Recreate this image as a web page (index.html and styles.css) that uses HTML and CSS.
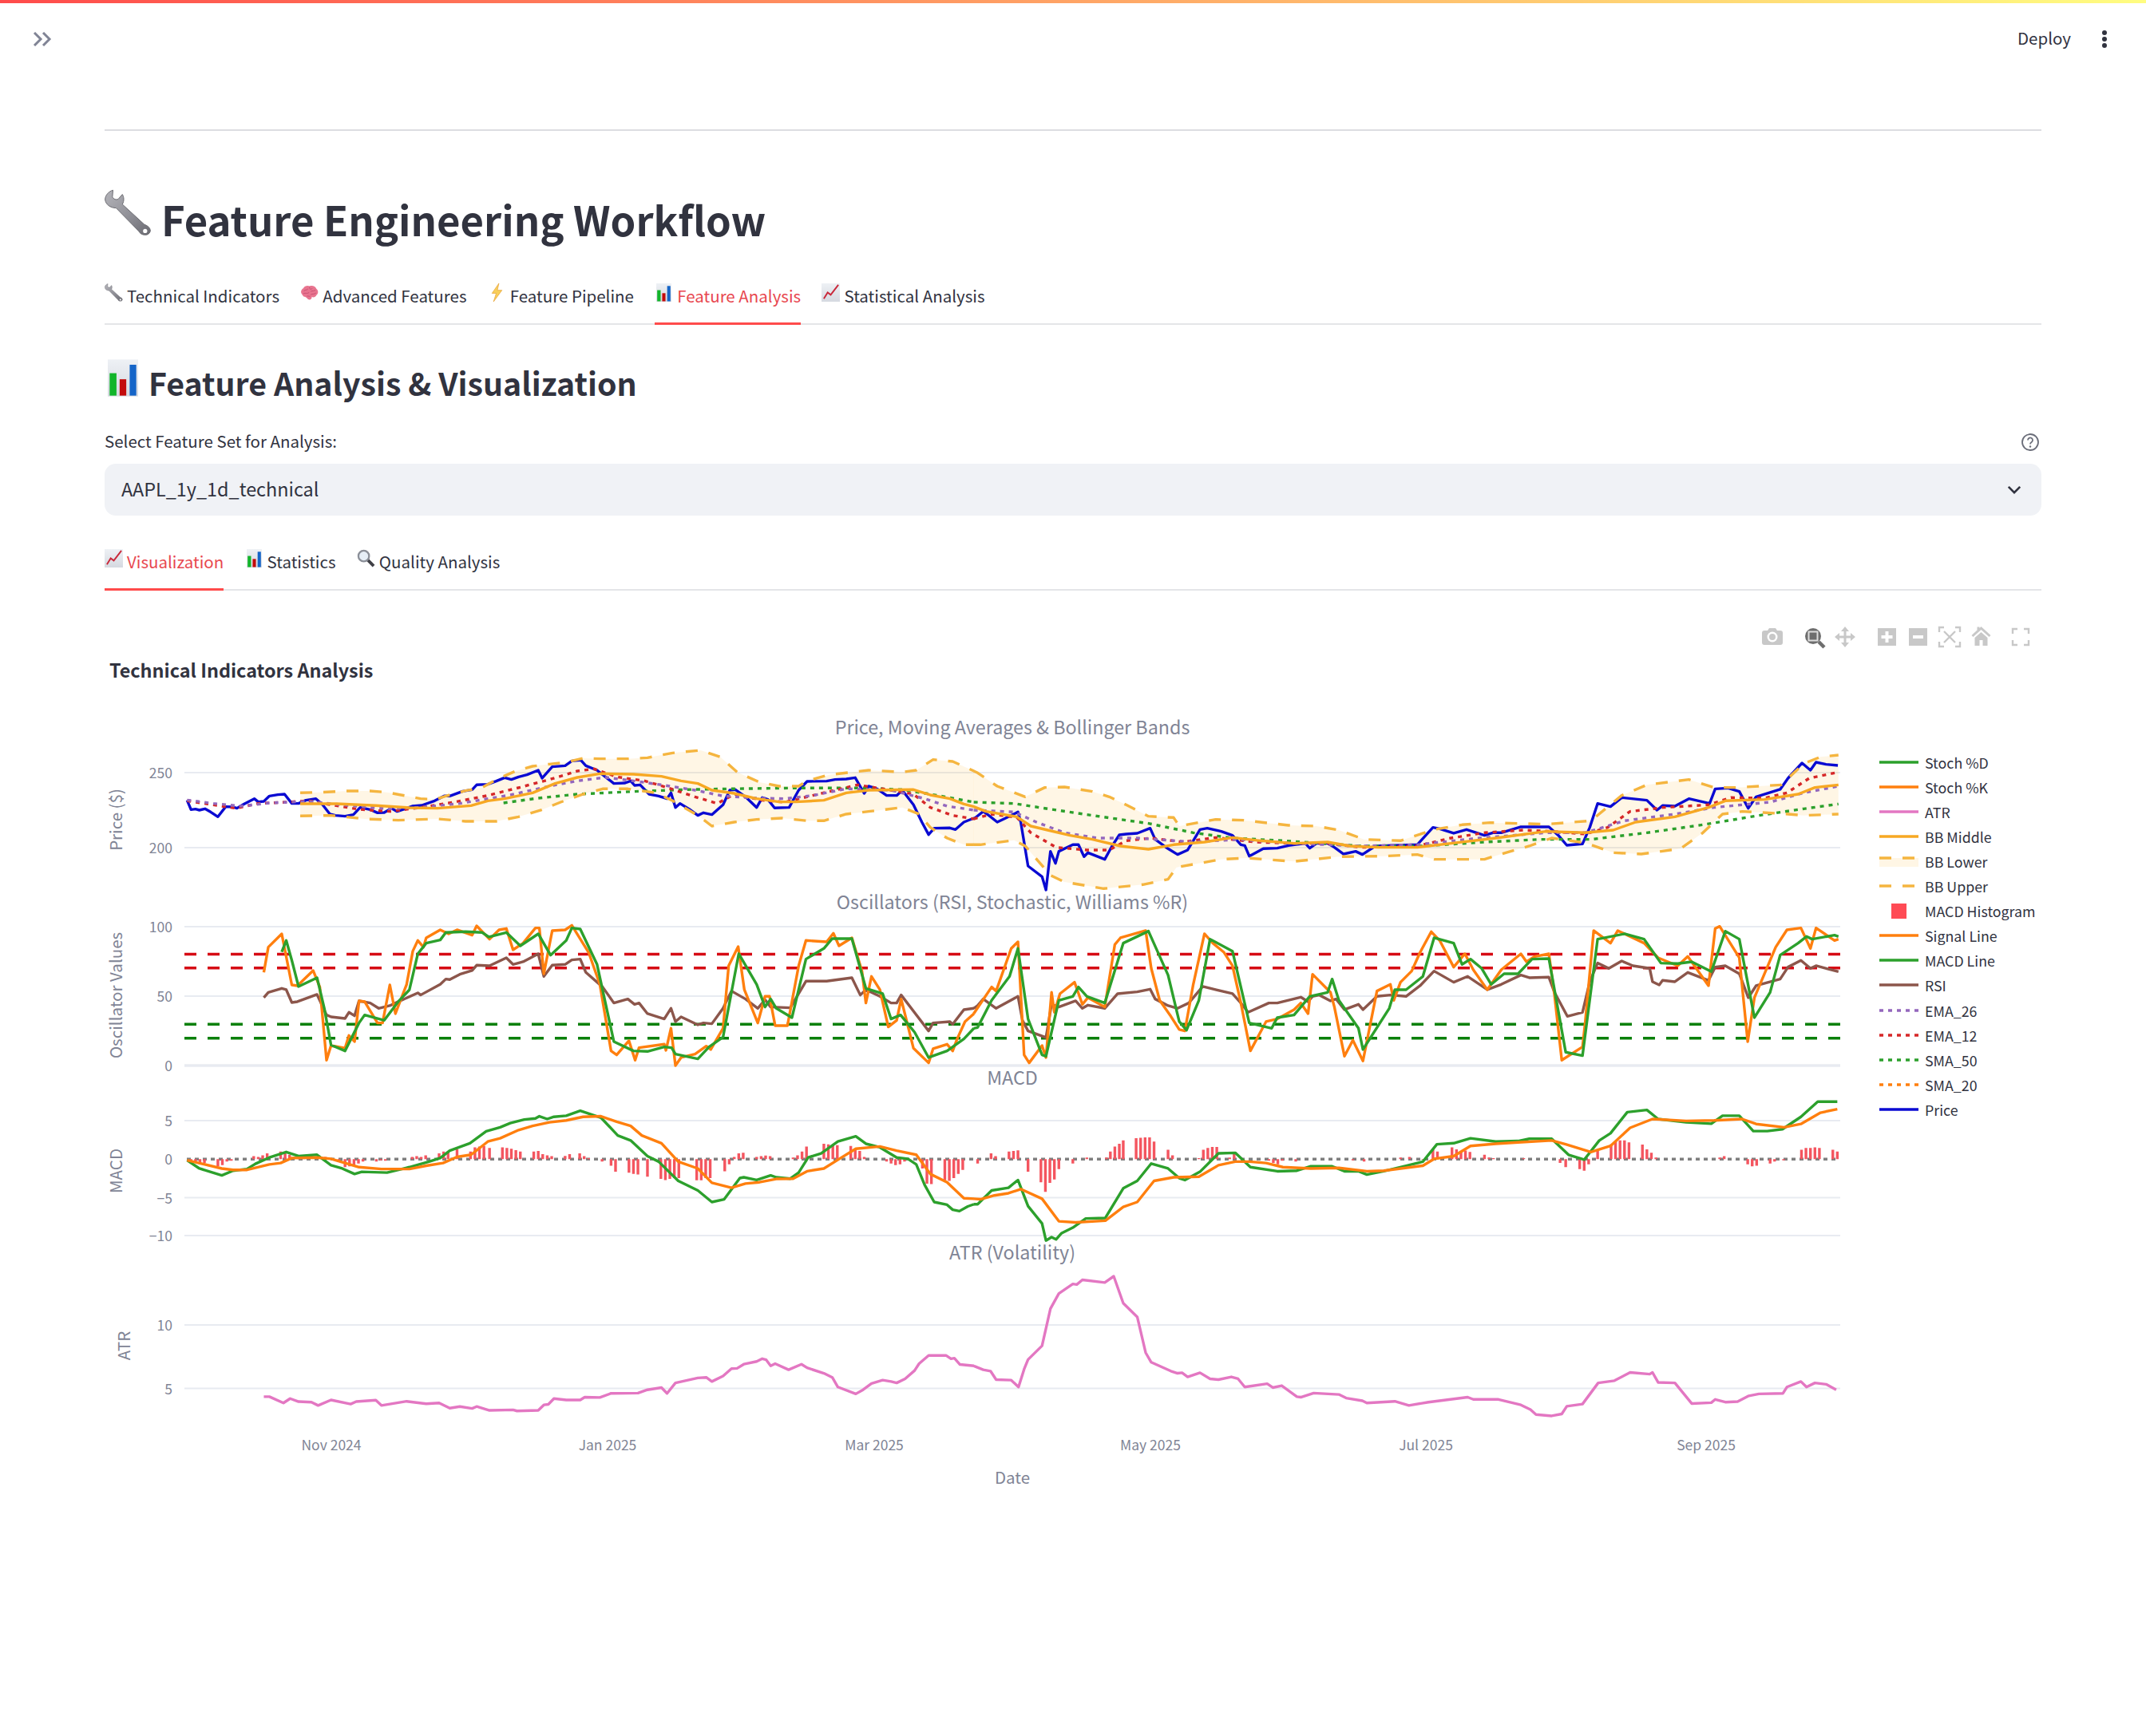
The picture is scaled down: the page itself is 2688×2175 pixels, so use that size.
FILE: index.html
```html
<!DOCTYPE html>
<html>
<head>
<title>Feature Engineering Workflow</title>
<meta charset="utf-8">
<link rel="stylesheet" href="styles.css">
</head>
<body>
<svg class="defs" width="0" height="0">
  <defs>
    <linearGradient id="steel" x1="0" y1="0" x2="1" y2="1">
      <stop offset="0" stop-color="#b4b4ba"/><stop offset=".6" stop-color="#8c8c93"/><stop offset="1" stop-color="#6a6a71"/>
    </linearGradient>
    <linearGradient id="paper" x1="0" y1="0" x2="0" y2="1">
      <stop offset="0" stop-color="#eef1f5"/><stop offset="1" stop-color="#d5d9e0"/>
    </linearGradient>
    <symbol id="e-wrench" viewBox="20 20 180 180">
      <path fill="url(#steel)" stroke="#6a6a70" stroke-width="3" d="M52 24C36 28 22 44 22 60C24 78 42 92 64 92L150 180C158 198 190 202 195 180C195 165 180 158 172 155L88 78C96 64 94 50 88 40L72 58C64 62 54 58 50 50Z"/>
      <circle cx="175" cy="180" r="8" fill="#fff"/>
    </symbol>
    <symbol id="e-brain" viewBox="0 0 70 60">
      <path fill="#e8748f" d="M8 38C0 30 3 18 12 14C16 5 28 2 36 6C46 2 58 6 62 16C70 22 70 34 62 40C58 48 50 50 44 46C46 54 38 60 30 56C26 50 20 46 16 46C12 44 10 42 8 38Z"/>
      <path fill="none" stroke="#c24a6c" stroke-width="2.5" d="M14 24C20 18 26 22 30 16M36 8C34 18 42 20 46 14M40 26C46 22 54 26 58 20M12 34C20 30 26 36 34 30M40 38C46 34 52 38 60 32M26 44C30 42 34 46 38 44"/>
    </symbol>
    <symbol id="e-bolt" viewBox="0 0 15 24">
      <polygon points="10,0 1,13 6.500,13 3,24 14,9 8,9" fill="#f8cf5a" stroke="#e9a63f" stroke-width=".8"/>
    </symbol>
    <symbol id="e-bars" viewBox="30 30 115 140">
      <rect x="30" y="30" width="115" height="140" fill="url(#paper)"/>
      <rect x="37" y="82" width="26" height="85" fill="#12b52a"/>
      <rect x="75" y="105" width="25" height="62" fill="#c30b0b"/>
      <rect x="113" y="50" width="25" height="117" fill="#1565c8"/>
    </symbol>
    <symbol id="e-trend" viewBox="0 0 24 24">
      <rect width="24" height="24" fill="url(#paper)"/>
      <polyline points="3,20 8,12 12,15 22,2" fill="none" stroke="#c9283a" stroke-width="2"/>
    </symbol>
    <symbol id="e-glass" viewBox="0 0 24 24">
      <line x1="13" y1="13" x2="22" y2="22" stroke="#3f3f46" stroke-width="4"/>
      <circle cx="9" cy="9" r="7" fill="#e6eef6" stroke="#8b8f98" stroke-width="2.400"/>
    </symbol>
  </defs>
</svg>

<div class="deco"></div>
<header class="toolbar">
  <svg class="side-btn" viewBox="0 0 24 18"><path d="M2 1l8 8-8 8M13 1l8 8-8 8"/></svg>
  <div class="toolbar-right">
    <span class="deploy">Deploy</span>
    <span class="kebab"><i></i><i></i><i></i></span>
  </div>
</header>

<main class="block">
  <hr class="rule">
  <h1 class="title"><svg class="title-ico"><use href="#e-wrench"/></svg>Feature Engineering Workflow</h1>

  <div class="tabs top-tabs">
    <div class="tab"><svg class="tab-ico"><use href="#e-wrench"/></svg>Technical Indicators</div>
    <div class="tab"><svg class="tab-ico"><use href="#e-brain"/></svg>Advanced Features</div>
    <div class="tab"><svg class="tab-ico"><use href="#e-bolt"/></svg>Feature Pipeline</div>
    <div class="tab active"><svg class="tab-ico"><use href="#e-bars"/></svg>Feature Analysis</div>
    <div class="tab"><svg class="tab-ico"><use href="#e-trend"/></svg>Statistical Analysis</div>
  </div>

  <h2 class="subtitle"><svg class="sub-ico"><use href="#e-bars"/></svg>Feature Analysis &amp; Visualization</h2>

  <div class="label-row">
    <label>Select Feature Set for Analysis:</label>
    <svg class="help" viewBox="0 0 24 24"><circle cx="12" cy="12" r="10"/><path d="M9 9.500a3 3 0 1 1 4.600 2.500c-1 .7-1.600 1.200-1.600 2.500"/><circle class="dot" cx="12" cy="17.500" r="1.200"/></svg>
  </div>
  <div class="select">
    <span>AAPL_1y_1d_technical</span>
    <svg class="caret" viewBox="0 0 20 12"><path d="M2 2l8 8 8-8"/></svg>
  </div>

  <div class="tabs sub-tabs">
    <div class="tab active"><svg class="tab-ico"><use href="#e-trend"/></svg>Visualization</div>
    <div class="tab"><svg class="tab-ico"><use href="#e-bars"/></svg>Statistics</div>
    <div class="tab"><svg class="tab-ico"><use href="#e-glass"/></svg>Quality Analysis</div>
  </div>

  <svg class="chart" viewBox="121 760 2446 1140" width="2446" height="1140">
    <!-- modebar -->
    <g class="mb">
      <path d="M2207 793q0-3 3-3h4l2-3h8l2 3h4q3 0 3 3v12q0 3-3 3h-20q-3 0-3-3z"/>
      <circle cx="2220" cy="798" r="6.500" fill="#fff"/><circle cx="2220" cy="798" r="4"/>
      <circle cx="2271" cy="797" r="10" fill="#6e6e6e"/><rect x="2265.500" y="791.500" width="11" height="11" fill="#6e6e6e" stroke="#ddd" stroke-width="2"/>
      <path d="M2278 804l7 7" stroke="#6e6e6e" stroke-width="4.500"/>
      <path d="M2311 785l5 6h-3.500v5.500h5.500v-3.500l6 5-6 5v-3.500h-5.500v5.500h3.500l-5 6-5-6h3.500v-5.500h-5.500v3.500l-6-5 6-5v3.500h5.500v-5.500h-3.500z"/>
      <path fill-rule="evenodd" d="M2352 787h23v22h-23zM2361.500 791v5h-5v4h5v5h4v-5h5v-4h-5v-5z"/>
      <path fill-rule="evenodd" d="M2391 787h23v22h-23zM2396 796v4h13v-4z"/>
      <path class="mb-line" d="M2429 792v-6h6M2449 786h6v6M2455 804v6h-6M2435 810h-6v-6M2435 791l14 14M2449 791l-14 14"/>
      <path d="M2481.500 785l12 11-2 2-10-9-10 9-2-2 7-6.500v-4h3v1.500zM2473.500 799l8-7 8 7v10h-6v-7h-4v7h-6z"/>
      <path class="mb-line" d="M2521 794v-6h6M2535 788h6v6M2541 802v6h-6M2527 808h-6v-6"/>
    </g>

    <text class="chart-head" x="137" y="849">Technical Indicators Analysis</text>

    <!-- grid -->
    <g class="grid">
      <path d="M231 968H2305M231 1062H2305"/>
      <path d="M231 1161H2305M231 1248H2305"/>
      <path class="zero" d="M231 1335H2305"/>
      <path d="M231 1404H2305M231 1500.500H2305M231 1548H2305"/>
      <path d="M231 1660H2305M231 1739.500H2305"/>
    </g>

    <!-- subplot titles -->
    <g class="plot-title">
      <text x="1268" y="920">Price, Moving Averages &amp; Bollinger Bands</text>
      <text x="1268" y="1139">Oscillators (RSI, Stochastic, Williams %R)</text>
      <text x="1268" y="1359">MACD</text>
      <text x="1268" y="1578">ATR (Volatility)</text>
    </g>

    <!-- axis labels -->
    <g class="tick y-tick">
      <text x="216" y="975">250</text><text x="216" y="1069">200</text>
      <text x="216" y="1168">100</text><text x="216" y="1255">50</text><text x="216" y="1342">0</text>
      <text x="216" y="1411">5</text><text x="216" y="1459">0</text><text x="216" y="1508">−5</text><text x="216" y="1555">−10</text>
      <text x="216" y="1667">10</text><text x="216" y="1747">5</text>
    </g>
    <g class="tick x-tick">
      <text x="415" y="1817">Nov 2024</text><text x="761" y="1817">Jan 2025</text><text x="1095" y="1817">Mar 2025</text>
      <text x="1441" y="1817">May 2025</text><text x="1786" y="1817">Jul 2025</text><text x="2137" y="1817">Sep 2025</text>
    </g>
    <text class="axis-title mid" x="1268" y="1859">Date</text>
    <text class="axis-title mid" transform="translate(153 1027) rotate(-90)">Price ($)</text>
    <text class="axis-title mid" transform="translate(153 1247) rotate(-90)">Oscillator Values</text>
    <text class="axis-title mid" transform="translate(153 1467) rotate(-90)">MACD</text>
    <text class="axis-title mid" transform="translate(163 1686) rotate(-90)">ATR</text>

    <!-- reference lines -->
    <path class="dash ref-red" d="M231 1195.500H2305M231 1212.700H2305"/>
    <path class="dash ref-green" d="M231 1283.300H2305M231 1300.700H2305"/>
    <path class="dot-base" d="M234 1452.300H2303"/>

    <!-- left half of the top two panels -->
    <g transform="translate(120 880) scale(.7015 .3333)">
      <polygon class="band" points="365,340 400,338 450,333 490,333 520,338 545,348 580,362 605,365 625,352 660,332 690,320 720,285 750,258 780,240 810,232 840,225 870,210 900,212 950,212 985,208 1030,190 1080,180 1115,205 1145,262 1185,300 1220,315 1255,315 1270,295 1310,272 1380,255 1440,262 1465,255 1495,215 1530,222 1568,258 1568,535 1550,535 1520,510 1490,470 1470,420 1440,395 1380,410 1340,420 1300,445 1270,445 1225,435 1180,440 1140,450 1100,465 1075,425 1030,370 1000,340 950,325 905,325 870,345 830,375 795,405 755,430 715,447 660,447 610,438 540,443 480,438 420,425 365,427"/>
      <polyline class="ln price" points="163,368 170,403 178,401 185,405 195,400 205,412 218,430 232,392 245,393 252,398 265,382 283,362 290,374 300,372 310,352 325,347 337,345 350,380 362,380 375,368 393,362 405,385 418,420 428,425 445,428 460,422 472,395 490,403 503,415 515,414 528,398 538,410 550,402 565,390 582,387 605,370 622,352 632,352 655,334 672,328 680,310 700,308 715,296 730,283 742,290 755,280 770,272 790,255 797,285 815,242 838,238 850,220 866,217 875,238 895,255 910,280 925,305 945,303 955,295 962,312 972,310 988,345 1005,352 1020,362 1027,340 1035,395 1043,380 1060,402 1075,425 1085,415 1100,422 1120,385 1132,330 1142,328 1160,355 1180,395 1190,358 1200,365 1212,397 1238,395 1255,330 1270,297 1305,296 1320,290 1340,288 1356,283 1372,342 1380,315 1395,325 1412,350 1430,350 1440,330 1460,385 1475,450 1487,497 1497,473 1525,472 1535,478 1550,450 1568,435"/>
      <polyline class="ln dots sma50" points="728,378 790,360 860,345 960,335 1050,328 1130,325 1240,322 1370,322 1440,328 1490,345 1568,375"/>
      <polyline class="ln dots ema12" points="163,370 200,382 250,398 290,380 340,375 380,370 420,385 470,402 525,410 580,395 640,375 700,350 760,318 810,290 860,258 890,250 930,280 980,295 1020,320 1070,355 1110,380 1140,345 1190,368 1230,375 1280,350 1330,325 1360,310 1420,330 1460,345 1490,395 1530,425 1568,438"/>
      <polyline class="ln dots ema26" points="163,367 210,380 260,390 310,378 380,372 440,385 520,400 580,395 650,380 740,348 810,315 860,295 910,282 960,295 1010,310 1070,330 1120,352 1180,360 1230,362 1280,350 1340,325 1420,330 1480,362 1520,390 1568,405"/>
      <polyline class="ln dash bb" points="365,340 400,338 450,333 490,333 520,338 545,348 580,362 605,365 625,352 660,332 690,320 720,285 750,258 780,240 810,232 840,225 870,210 900,212 950,212 985,208 1030,190 1080,180 1115,205 1145,262 1185,300 1220,315 1255,315 1270,295 1310,272 1380,255 1440,262 1465,255 1495,215 1530,222 1568,258"/>
      <polyline class="ln dash bb" points="365,427 420,425 480,438 540,443 610,438 660,447 715,447 755,430 795,405 830,375 870,345 905,325 950,325 1000,340 1030,370 1075,425 1100,465 1140,450 1180,440 1225,435 1270,445 1300,445 1340,420 1380,410 1440,395 1470,420 1490,470 1520,510 1550,535 1568,535"/>
      <polyline class="ln bbmid" points="365,381 430,381 500,388 560,396 610,398 670,388 700,370 730,362 780,340 820,305 860,282 900,268 960,270 1010,278 1045,295 1075,305 1100,330 1140,342 1180,362 1220,374 1250,374 1300,368 1340,340 1380,330 1460,328 1490,348 1525,362 1550,382 1568,392"/>

      <polyline class="ln rsi" points="300,1110 308,1090 332,1075 340,1080 350,1128 360,1125 395,1098 412,1175 420,1182 445,1188 452,1165 462,1178 470,1122 490,1130 505,1150 525,1140 535,1130 575,1092 580,1100 615,1060 625,1040 632,1042 650,1022 672,1008 680,988 703,990 733,960 745,985 763,975 790,945 800,1030 815,988 838,985 850,968 865,965 875,1015 905,1070 925,1130 950,1115 962,1135 970,1130 985,1170 1015,1190 1027,1150 1035,1200 1045,1182 1075,1212 1085,1205 1100,1208 1120,1150 1135,1085 1160,1115 1182,1150 1195,1118 1205,1145 1240,1148 1268,1048 1305,1048 1350,1035 1365,1100 1375,1080 1400,1105 1420,1130 1430,1130 1438,1100 1487,1235 1495,1205 1525,1200 1530,1210 1550,1155 1568,1150"/>
      <polyline class="ln stk" points="300,1015 308,920 332,870 350,1062 360,1065 388,1008 400,1070 412,1345 420,1290 445,1300 452,1252 462,1275 470,1122 480,1125 503,1205 512,1205 525,1062 535,1170 555,1060 566,935 575,895 585,920 590,885 615,855 630,870 645,855 672,875 680,840 703,890 720,855 733,850 745,930 763,905 785,848 792,848 800,1020 815,858 838,855 850,838 880,940 900,1060 920,1310 930,1325 952,1272 963,1345 970,1298 1015,1285 1018,1308 1027,1225 1035,1365 1045,1335 1070,1322 1090,1292 1098,1305 1120,1225 1130,990 1147,918 1158,1080 1182,1205 1195,1105 1203,1105 1213,1215 1235,1215 1255,990 1268,895 1305,900 1317,868 1327,915 1350,885 1368,1010 1375,1130 1385,1030 1400,1080 1415,1220 1430,1195 1438,1115 1460,1300 1487,1355 1495,1302 1520,1285 1530,1310 1538,1265 1552,1200 1568,1170"/>
      <polyline class="ln std" points="332,938 340,895 350,970 362,1068 395,1035 408,1150 420,1288 445,1310 470,1205 480,1175 515,1195 540,1125 560,1080 575,945 590,905 615,893 625,865 660,862 690,865 702,882 733,865 758,915 790,870 812,950 840,895 850,848 865,852 895,985 925,1275 960,1310 985,1312 1015,1295 1028,1298 1035,1322 1075,1340 1095,1295 1120,1258 1135,1090 1148,945 1180,1060 1195,1145 1205,1115 1215,1150 1243,1185 1268,965 1300,925 1315,888 1350,888 1375,1075 1405,1095 1420,1190 1437,1175 1462,1240 1487,1335 1520,1310 1550,1265 1568,1225"/>
    </g>

    <!-- right half of the top two panels -->
    <g transform="translate(1200 880) scale(.7015 .3333)">
      <polygon class="band" points="28,258 35,265 70,315 120,355 155,320 190,318 240,335 270,355 300,385 340,428 385,433 395,465 460,440 510,443 590,462 640,465 680,480 725,515 790,520 850,478 900,460 950,452 1050,458 1130,445 1185,350 1230,310 1305,290 1350,320 1390,320 1470,310 1510,230 1540,205 1572,198 1572,420 1510,425 1470,418 1400,410 1365,420 1330,490 1290,550 1220,570 1170,565 1120,528 1060,510 1020,540 970,570 940,590 850,590 820,572 760,578 680,580 600,598 515,585 470,590 390,620 375,665 330,685 260,700 190,675 165,650 120,540 100,518 40,535 28,535"/>
      <polyline class="ln price" points="28,435 30,435 45,410 55,425 70,450 85,435 107,412 112,450 125,615 150,655 157,705 165,560 174,605 180,560 205,535 215,535 225,580 232,565 262,590 275,540 288,498 300,495 320,492 343,473 352,515 375,550 392,572 410,555 432,478 445,473 470,485 490,500 505,535 512,538 520,578 545,550 570,548 590,538 620,530 628,548 640,530 660,530 672,545 688,570 710,560 722,572 745,540 820,535 848,470 860,475 885,492 908,478 940,500 955,490 970,490 1005,468 1055,468 1072,500 1087,537 1115,532 1128,470 1142,380 1165,392 1185,358 1230,368 1248,405 1258,388 1280,390 1305,362 1342,380 1352,325 1375,322 1395,335 1411,398 1425,355 1468,327 1482,285 1507,228 1522,255 1532,225 1550,233 1571,237"/>
      <polyline class="ln dots sma50" points="28,375 100,380 160,400 240,425 340,455 420,490 490,510 580,520 720,540 830,540 940,525 1040,515 1130,515 1230,490 1330,460 1430,425 1510,400 1572,382"/>
      <polyline class="ln dots ema12" points="28,438 60,420 105,432 130,490 175,545 230,555 270,555 300,520 345,510 400,525 460,508 530,525 600,530 660,530 720,545 820,540 880,510 940,490 1010,480 1060,485 1120,495 1160,470 1200,410 1260,395 1340,385 1380,358 1440,360 1480,340 1520,285 1572,262"/>
      <polyline class="ln dots ema26" points="28,405 100,412 140,450 190,490 250,510 320,510 420,525 500,515 600,530 720,540 820,535 930,510 1050,490 1120,490 1190,445 1280,420 1350,395 1450,375 1510,340 1572,315"/>
      <polyline class="ln dash bb" points="28,258 35,265 70,315 120,355 155,320 190,318 240,335 270,355 300,385 340,428 385,433 395,465 460,440 510,443 590,462 640,465 680,480 725,515 790,520 850,478 900,460 950,452 1050,458 1130,445 1185,350 1230,310 1305,290 1350,320 1390,320 1470,310 1510,230 1540,205 1572,198"/>
      <polyline class="ln dash bb" points="28,535 40,535 100,518 120,540 165,650 190,675 260,700 330,685 375,665 390,620 470,590 515,585 600,598 680,580 760,578 820,572 850,590 940,590 970,570 1020,540 1060,510 1120,528 1170,565 1220,570 1290,550 1330,490 1365,420 1400,410 1470,418 1510,425 1572,420"/>
      <polyline class="ln bbmid" points="28,392 50,410 105,430 130,465 160,480 200,500 240,515 290,540 340,552 385,535 440,525 490,508 540,520 600,530 660,525 700,540 750,545 820,545 880,530 960,510 1050,485 1120,490 1170,480 1210,450 1280,430 1340,395 1370,370 1440,365 1500,345 1530,320 1572,310"/>

      <polyline class="ln rsi" points="28,1150 35,1140 45,1115 68,1150 107,1105 115,1195 125,1235 157,1260 167,1135 180,1145 210,1122 222,1150 232,1138 262,1150 285,1095 320,1088 343,1078 352,1115 375,1140 392,1150 412,1130 437,1068 490,1095 505,1130 518,1165 555,1130 570,1130 612,1108 625,1125 633,1105 645,1100 665,1122 675,1115 690,1155 715,1135 723,1155 748,1105 772,1100 800,1105 825,1065 850,1010 885,1052 910,1030 945,1080 970,1060 1005,1025 1020,1035 1055,1033 1065,1090 1088,1180 1115,1165 1128,1050 1142,980 1162,1000 1185,972 1205,990 1235,1000 1240,1050 1252,1062 1258,1045 1280,1050 1303,1015 1340,1045 1352,995 1370,990 1395,1020 1411,1110 1425,1065 1468,1040 1482,995 1505,970 1522,1000 1532,990 1572,1012"/>
      <polyline class="ln stk" points="28,1170 60,1070 68,1085 95,925 107,900 118,1325 127,1355 150,1290 157,1335 167,1090 172,1165 182,1095 208,1052 222,1135 232,1110 262,1145 280,910 290,885 335,858 345,1000 360,1120 380,1180 395,1230 405,1235 420,1060 440,870 455,905 475,940 490,990 505,1130 522,1310 550,1200 570,1190 600,1155 612,1130 625,1170 633,1022 665,1090 672,1145 690,1330 705,1270 723,1348 748,1085 772,1060 778,1120 790,1052 810,1010 825,940 845,862 860,895 885,995 905,945 920,1005 945,1080 970,1005 1005,945 1015,975 1030,955 1055,945 1065,1100 1078,1345 1115,1295 1120,1200 1135,858 1165,905 1178,858 1225,905 1250,960 1285,990 1303,955 1340,1065 1352,850 1360,842 1395,960 1410,1275 1422,1110 1460,920 1480,855 1505,848 1522,925 1532,848 1565,895 1572,890"/>
      <polyline class="ln std" points="28,1225 35,1222 60,1120 92,1030 107,925 125,1190 150,1325 157,1330 180,1120 205,1105 215,1070 230,1105 262,1130 295,905 340,860 375,1025 395,1200 408,1232 430,1120 450,890 490,935 520,1205 560,1225 570,1185 600,1175 628,1105 660,1090 668,1040 680,1120 715,1225 723,1305 770,1150 780,1080 800,1080 830,1030 850,885 885,905 900,985 915,965 935,1000 952,1060 975,1020 1000,1020 1025,965 1055,963 1085,1315 1115,1328 1142,890 1190,870 1225,890 1255,980 1285,982 1310,975 1345,1012 1370,860 1395,890 1422,1185 1450,1090 1468,950 1500,905 1515,880 1525,890 1565,875 1572,880"/>
    </g>

    <!-- left half of the bottom two panels -->
    <g transform="translate(120 1340) scale(.7015 .3444)">
      <path class="hist" d="M170 326V335M178 326V338M186 326V345M194 326V340M218 326V352M226 326V348M234 326V335M242 326V332M282 326V315M290 326V318M298 326V312M306 326V305M330 326V298M338 326V303M346 326V310M354 326V318M362 326V320M372 326V318M380 326V318M410 326V318M418 326V322M426 326V330M434 326V332M445 326V355M453 326V352M461 326V348M469 326V342M477 326V335M501 326V335M509 326V330M517 326V332M565 326V318M573 326V315M581 326V318M589 326V312M613 326V305M621 326V298M629 326V298M645 326V290M669 326V298M677 326V283M685 326V280M693 326V278M703 326V285M726 326V283M734 326V285M742 326V288M750 326V293M758 326V298M782 326V298M790 326V296M798 326V308M806 326V312M814 326V315M838 326V314M846 326V308M864 326V305M872 326V315M880 326V322M904 326V335M920 326V350M928 326V372M952 326V375M960 326V380M968 326V382M985 326V390M1009 326V398M1017 326V402M1025 326V398M1033 326V395M1041 326V395M1073 326V403M1081 326V403M1089 326V395M1097 326V395M1123 326V370M1131 326V345M1140 326V318M1148 326V305M1156 326V303M1180 326V318M1188 326V315M1196 326V313M1204 326V315M1245 326V320M1253 326V312M1261 326V298M1269 326V280M1300 326V270M1308 326V272M1316 326V275M1324 326V275M1348 326V278M1356 326V290M1364 326V296M1372 326V318M1412 326V335M1420 326V342M1428 326V348M1436 326V345M1444 326V335M1476 326V360M1484 326V415M1492 326V417M1516 326V403M1524 326V405M1532 326V395M1540 326V380M1548 326V365"/>
      <polyline class="ln macd" points="163,330 185,360 225,385 245,368 270,362 285,343 310,320 340,300 362,315 395,310 420,348 440,360 462,380 475,372 520,375 560,355 595,335 615,322 632,295 668,268 697,225 722,210 740,195 765,182 785,178 792,170 806,180 818,172 840,168 865,150 902,175 932,240 955,258 985,315 1005,335 1040,405 1075,440 1100,482 1122,472 1150,395 1157,392 1180,402 1205,385 1215,392 1240,397 1255,375 1272,320 1295,305 1325,262 1357,243 1375,270 1400,283 1430,320 1450,325 1465,345 1480,420 1497,482 1520,492 1530,510 1542,515 1557,498 1568,490"/>
      <polyline class="ln sig" points="163,330 190,343 225,360 245,365 270,365 310,345 330,340 350,322 395,320 420,325 445,340 470,355 510,362 560,362 590,350 620,340 645,318 670,310 700,262 722,250 755,220 780,205 810,192 840,185 870,172 902,170 930,190 955,205 975,240 1010,268 1040,335 1075,360 1100,412 1135,430 1160,415 1185,410 1215,398 1245,397 1270,370 1300,360 1330,322 1357,288 1400,280 1430,295 1465,310 1490,380 1520,410 1550,468 1568,470"/>
      <polyline class="ln atr" points="300,1190 310,1190 335,1213 347,1197 362,1208 385,1210 397,1222 420,1202 455,1217 465,1208 500,1203 510,1222 555,1207 590,1216 613,1213 632,1232 650,1226 672,1233 680,1226 703,1240 745,1238 752,1242 790,1240 800,1220 808,1218 818,1197 840,1202 865,1202 873,1192 900,1193 920,1178 968,1177 985,1165 1010,1157 1020,1178 1035,1140 1075,1122 1090,1120 1100,1135 1120,1115 1135,1088 1145,1087 1157,1072 1180,1062 1190,1052 1197,1056 1205,1078 1213,1070 1237,1092 1260,1072 1270,1085 1300,1105 1315,1120 1325,1155 1357,1180 1370,1165 1385,1142 1405,1130 1420,1135 1430,1140 1445,1125 1462,1095 1470,1070 1487,1040 1518,1040 1527,1052 1533,1050 1543,1073 1568,1078"/>
    </g>

    <!-- right half of the bottom two panels -->
    <g transform="translate(1200 1340) scale(.7015 .3444)">
      <path class="hist" d="M35 326V342M59 326V305M67 326V315M91 326V298M99 326V296M107 326V294M125 326V372M148 326V410M156 326V445M164 326V412M172 326V400M180 326V362M205 326V342M230 326V320M265 326V320M272 326V298M280 326V280M288 326V270M295 326V258M318 326V250M326 326V248M334 326V247M342 326V247M350 326V262M375 326V292M383 326V312M430 326V322M438 326V292M446 326V285M454 326V282M462 326V282M485 326V320M493 326V305M555 326V332M563 326V340M571 326V345M579 326V332M603 326V335M705 326V330M725 326V335M790 326V320M806 326V318M830 326V328M848 326V290M856 326V298M882 326V283M890 326V290M898 326V300M906 326V295M914 326V300M940 326V310M948 326V320M956 326V322M1010 326V322M1075 326V340M1085 326V355M1110 326V362M1118 326V368M1126 326V345M1142 326V295M1166 326V272M1174 326V262M1182 326V258M1190 326V258M1198 326V265M1222 326V273M1230 326V290M1238 326V303M1246 326V320M1360 326V320M1368 326V315M1410 326V345M1418 326V352M1426 326V350M1450 326V342M1458 326V335M1474 326V330M1506 326V292M1514 326V285M1522 326V285M1530 326V283M1538 326V285M1562 326V292M1570 326V298"/>
      <polyline class="ln macd" points="28,490 35,490 60,440 90,430 107,402 125,497 150,560 157,622 167,610 175,618 185,595 205,575 228,542 263,540 295,432 320,405 345,342 375,360 395,395 405,402 432,372 465,305 495,303 522,355 570,370 605,368 630,352 668,352 690,370 715,370 730,382 760,370 800,350 830,335 855,272 885,268 915,250 960,262 1000,260 1020,252 1060,252 1090,310 1118,328 1145,258 1165,232 1195,155 1230,147 1250,180 1300,192 1345,197 1365,168 1395,168 1420,224 1445,224 1472,217 1505,172 1535,117 1570,117"/>
      <polyline class="ln sig" points="28,470 40,472 65,458 90,450 112,435 150,470 180,552 210,556 263,550 295,500 320,482 350,405 385,392 430,390 465,348 495,335 520,335 550,340 580,355 630,360 680,358 730,370 760,368 830,350 850,325 885,315 915,278 960,270 1000,265 1060,258 1085,272 1130,300 1165,278 1200,212 1240,180 1300,187 1350,185 1400,180 1425,198 1475,210 1505,198 1540,157 1570,144"/>
      <polyline class="ln atr" points="28,1078 30,1080 45,1092 58,1097 68,1128 95,1130 108,1155 118,1090 125,1055 150,1005 165,870 180,815 205,780 212,782 222,765 262,775 278,752 295,850 320,900 335,1030 345,1065 380,1097 392,1105 400,1103 410,1118 432,1103 450,1125 465,1128 488,1118 500,1125 512,1155 552,1143 562,1157 578,1150 605,1190 612,1192 635,1177 680,1182 693,1195 722,1205 730,1213 780,1207 805,1222 840,1210 910,1192 920,1200 965,1200 1005,1220 1022,1237 1032,1255 1060,1260 1078,1253 1087,1225 1115,1217 1143,1140 1172,1132 1200,1102 1235,1108 1240,1102 1250,1138 1280,1140 1310,1215 1345,1212 1352,1200 1370,1210 1392,1208 1412,1187 1430,1180 1473,1178 1480,1155 1505,1135 1515,1155 1530,1140 1550,1145 1568,1165"/>
    </g>

    <!-- legend -->
    <g class="legend">
      <path class="ln std" d="M2354 955h49"/><text x="2411" y="963">Stoch %D</text>
      <path class="ln stk" d="M2354 986h49"/><text x="2411" y="994">Stoch %K</text>
      <path class="ln atr" d="M2354 1017h49"/><text x="2411" y="1025">ATR</text>
      <path class="ln bbmid" d="M2354 1048h49"/><text x="2411" y="1056">BB Middle</text>
      <rect class="band" x="2354" y="1075" width="49" height="11"/>
      <path class="ln dash bb" d="M2354 1075h49"/><text x="2411" y="1087">BB Lower</text>
      <path class="ln dash bb" d="M2354 1110h49"/><text x="2411" y="1118">BB Upper</text>
      <rect x="2369" y="1132" width="19" height="19" fill="#ff4b55"/><text x="2411" y="1149">MACD Histogram</text>
      <path class="ln sig" d="M2354 1172h49"/><text x="2411" y="1180">Signal Line</text>
      <path class="ln macd" d="M2354 1203h49"/><text x="2411" y="1211">MACD Line</text>
      <path class="ln rsi" d="M2354 1234h49"/><text x="2411" y="1242">RSI</text>
      <path class="ln dots ema26" d="M2354 1266h49"/><text x="2411" y="1274">EMA_26</text>
      <path class="ln dots ema12" d="M2354 1297h49"/><text x="2411" y="1305">EMA_12</text>
      <path class="ln dots sma50" d="M2354 1328h49"/><text x="2411" y="1336">SMA_50</text>
      <path class="ln dots sma20" d="M2354 1359h49"/><text x="2411" y="1367">SMA_20</text>
      <path class="ln price" d="M2354 1390h49"/><text x="2411" y="1398">Price</text>
    </g>
  </svg>
</main>
</body>
</html>
```

FILE: styles.css
```css
* {box-sizing: border-box;}
html, body {margin: 0; padding: 0; background: #fff;}
body {
  font-family: "Noto Sans CJK SC", "Noto Sans", sans-serif;
  color: #31333f;
}
.defs {position: absolute;}

.deco {
  height: 4px;
  background: linear-gradient(90deg, #ff4b4b, #fffd80);
}
.toolbar {
  height: 94px;
  padding: 0 49px 0 41px;
  display: flex;
  justify-content: space-between;
}
.side-btn {
  width: 24px; height: 18px; margin-top: 36px;
  fill: none; stroke: #808495; stroke-width: 3;
}
.toolbar-right {display: flex; height: 90px; align-items: center; gap: 39px;}
.deploy {font-size: 20.500px; line-height: 86px; height: 90px;}
.kebab {display: flex; flex-direction: column; gap: 2.400px; width: 6px;}
.kebab i {display: block; width: 6px; height: 6px; border-radius: 50%; background: #31333f;}

.block {padding: 64px 131px 0;}
.rule {margin: 0; height: 2px; border: 0; background: #dcdde1;}

.title {
  margin: 73px 0 0;
  height: 80px;
  display: flex;
  gap: 12px;
  font-size: 50.800px;
  font-weight: 700;
  line-height: 75px;
}
.title-ico {width: 59px; height: 59px; flex: none;}

.tabs {
  height: 62px;
  display: flex;
  gap: 26.300px;
  border-bottom: 2px solid #e4e5e8;
}
.top-tabs {margin-top: 28px;}
.sub-tabs {margin-top: 32px;}
.tab {
  height: 62px;
  display: flex;
  gap: 5px;
  font-size: 20.500px;
  line-height: 50px;
}
.tab.active {color: #e8474f; border-bottom: 3px solid #ff4b4b;}
.tab-ico {width: 23px; height: 23px; margin-top: 10px; flex: none;}

.subtitle {
  margin: 33px 0 0;
  height: 80px;
  display: flex;
  gap: 13px;
  font-size: 39.300px;
  font-weight: 700;
  line-height: 77px;
}
.sub-ico {width: 38px; height: 47px; margin: 10px 0 0 4px; flex: none;}

.label-row {
  margin-top: 18px;
  height: 30px;
  display: flex;
  justify-content: space-between;
  font-size: 20.500px;
  line-height: 28px;
}
.help {width: 24px; height: 24px; margin: 4px 2px 0 0; fill: none; stroke: #6b6e7a; stroke-width: 1.800;}
.help .dot {fill: #6b6e7a; stroke: none;}

.select {
  margin-top: 13px;
  height: 65px;
  padding: 0 25px 0 21px;
  display: flex;
  align-items: center;
  justify-content: space-between;
  background: #f0f2f6;
  border-radius: 14px;
  font-size: 23.400px;
}
.select span {line-height: 63px; height: 65px;}
.caret {width: 18px; height: 11px; fill: none; stroke: #31333f; stroke-width: 3;}

.chart {display: block; margin: 20px -10px 0;}
.chart text {font-family: "Noto Sans CJK SC", "Noto Sans", sans-serif;}
.chart-head {font-size: 23.400px; font-weight: 700; fill: #31333f;}
.plot-title text {font-size: 23.300px; fill: #808495; text-anchor: middle;}
.tick text {font-size: 17.500px; fill: #808495;}
.y-tick text {text-anchor: end;}
.x-tick text {text-anchor: middle;}
.axis-title {font-size: 20.500px; fill: #808495;}
.mid {text-anchor: middle;}
.legend text {font-size: 17.800px; fill: #31333f;}

.grid path {fill: none; stroke: #e8ebf1; stroke-width: 2;}
.grid .zero {stroke-width: 3.400;}

.mb {fill: #c8c8c8;}
.mb-line {fill: none; stroke: #c8c8c8; stroke-width: 2.400;}

.band {fill: #ffa500; fill-opacity: .1; stroke: none;}
.ln {fill: none; stroke-width: 3.400; stroke-linejoin: round; vector-effect: non-scaling-stroke;}
.dash {stroke-dasharray: 15 14; fill: none; stroke-width: 3.400; vector-effect: non-scaling-stroke;}
.dots {stroke-dasharray: 5 6;}
.ref-red {stroke: #d60a14;}
.ref-green {stroke: #0a800a;}
.dot-base {fill: none; stroke: #7f7f7f; stroke-width: 3.400; stroke-dasharray: 5 5;}
.hist {fill: none; stroke: #f4555f; stroke-width: 3.400; vector-effect: non-scaling-stroke;}

.price {stroke: #0a0ad2;}
.sma20 {stroke: #ff7f0e;}
.sma50 {stroke: #2ca02c;}
.ema12 {stroke: #d62728;}
.ema26 {stroke: #9467bd;}
.bb {stroke: #f5b53f;}
.bbmid {stroke: #f7a823;}
.rsi {stroke: #8c564b;}
.macd, .std {stroke: #2ca02c;}
.sig, .stk {stroke: #ff7f0e;}
.atr {stroke: #e377c2;}
```
